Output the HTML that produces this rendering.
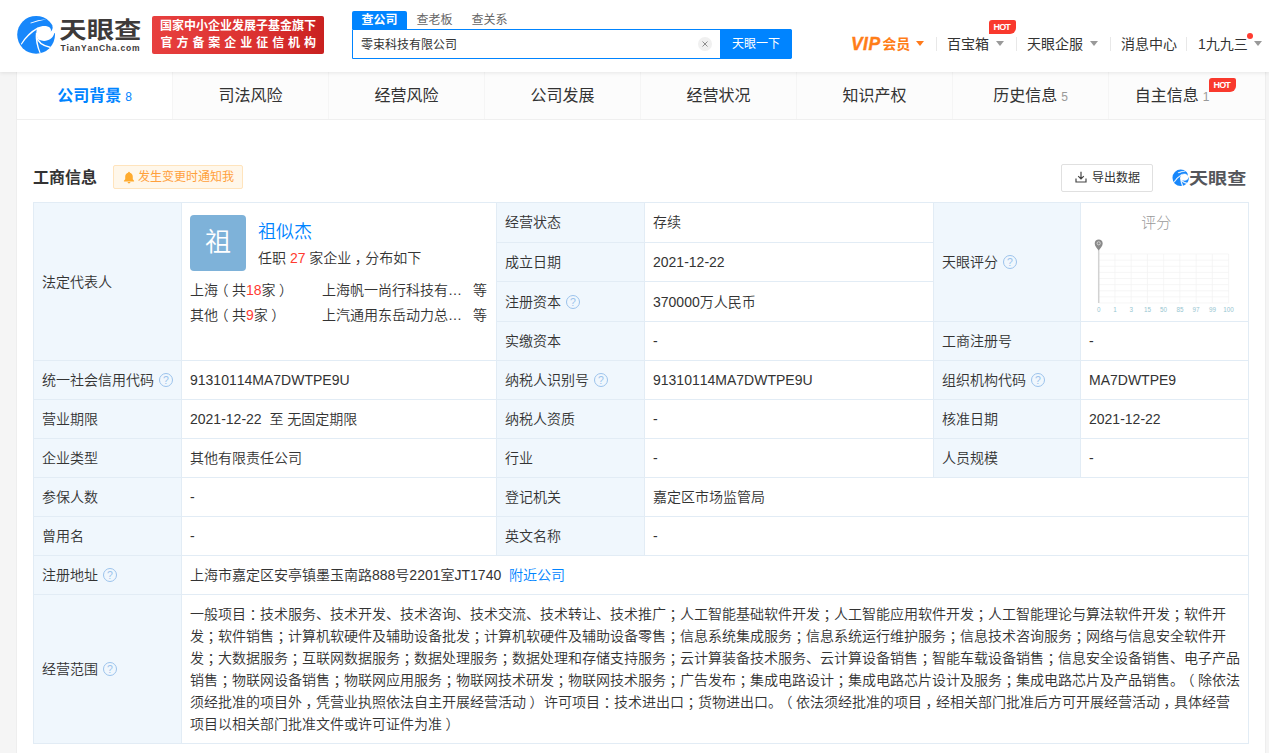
<!DOCTYPE html>
<html lang="zh-CN">
<head>
<meta charset="utf-8">
<title>天眼查</title>
<style>
*{box-sizing:border-box;margin:0;padding:0}
html,body{width:1269px;height:753px;overflow:hidden}
body{background:#f5f5f5;font-family:"Liberation Sans","Noto Sans CJK SC",sans-serif;font-size:14px;color:#333;position:relative;text-spacing-trim:space-all;font-kerning:none}
a{text-decoration:none;color:#0084ff}
/* header */
#hd{position:absolute;left:0;top:0;width:1269px;height:72px;background:#fff;box-shadow:0 1px 4px rgba(0,0,0,.09);z-index:5}
#logo{position:absolute;left:17px;top:14px;width:124px;height:42px}
#badge{position:absolute;left:152px;top:16px;width:172px;height:37.500px;border-radius:2px;background:linear-gradient(100deg,#e8403f 0%,#da302f 65%,#c8201f 100%);color:#fff;font-weight:bold;font-size:12px;line-height:16.800px;padding:2px 0 0 8px;white-space:nowrap}
#badge .l1{letter-spacing:0;display:block}
#badge .l2{letter-spacing:3.950px;display:block;padding-left:.500px}
#stabs{position:absolute;left:352px;top:11px;height:18px;font-size:12px;line-height:18px;color:#666;white-space:nowrap}
#stabs span{display:inline-block;height:18px;padding:0 9.5px;vertical-align:top}
#stabs .on{background:#0084ff;color:#fff;font-weight:bold;border-radius:2px 2px 0 0}
#sbox{position:absolute;left:352px;top:29px;width:440px;height:30px;border:1px solid #0084ff;border-radius:0 2px 2px 0;background:#fff}
#sbox .q{position:absolute;left:8px;top:1px;line-height:28px;font-size:12px;color:#333}
#sbox .x{position:absolute;left:345px;top:7px;width:14px;height:14px}
#sbox .btn{position:absolute;right:-1px;top:-1px;width:72px;height:30px;background:#0084ff;color:#fff;font-size:12px;line-height:30px;text-align:center;border-radius:0 2px 2px 0}
.nav{position:absolute;top:34px;font-size:14px;line-height:20px;color:#333;white-space:nowrap}
.car{position:absolute;top:41px;width:0;height:0;border-left:4.5px solid transparent;border-right:4.5px solid transparent;border-top:5px solid #999}
.sep{position:absolute;top:37px;width:1px;height:14px;background:#e8e8e8}
.hot{position:absolute;background:#f9392d;color:#fff;font-size:9px;font-weight:bold;line-height:14px;height:14px;width:27.500px;text-align:center;border-radius:3px 2px 6px 0;letter-spacing:-.9px;text-indent:-1px}
/* container */
#ct{position:absolute;left:17px;top:72px;width:1248px;height:681px;background:#fff;box-shadow:0 0 0 1px #eee}
#tabs{position:absolute;left:0;top:0;width:1248px;height:48px;display:flex;border-bottom:1px solid #efefef;background:#fcfcfc}
#tabs div{flex:0 0 156px;height:47px;line-height:47px;text-align:center;font-size:16px;color:#333;border-left:1px solid #f5f5f5;position:relative;white-space:nowrap}
#tabs div:first-child{border-left:0;flex-basis:155px}
#tabs div:last-child{flex-basis:157px}
#tabs div.on{background:#fff;color:#0084ff;font-weight:bold}
#tabs small{font-size:12px;font-weight:normal;color:#999;margin-left:4px}
#tabs div.on small{color:#0084ff}
#sec{position:absolute;left:16px;top:92px;width:1216px;height:30px}
#sec h2{position:absolute;left:0;top:2px;font-size:16px;line-height:24px;font-weight:bold;color:#333}
#notice{position:absolute;left:80px;top:1px;width:130px;height:24px;border:1px solid #ffe4bd;background:#fff7ea;border-radius:2px;color:#ffa03c;font-size:12px;line-height:22px;padding-left:24px;white-space:nowrap}
#notice svg{position:absolute;left:8.500px;top:5px;width:12px;height:13px}
#exp{position:absolute;left:1028px;top:0;width:92px;height:28px;border:1px solid #e0e0e0;border-radius:2px;font-size:12px;line-height:26px;color:#333;padding-left:30px;white-space:nowrap;background:#fff}
#exp svg{position:absolute;left:13px;top:6.200px}
#wm{position:absolute;left:1139px;top:3px;width:76px;height:22px}
/* table */
#tb{position:absolute;left:16px;top:130px;width:1215px;border-collapse:collapse;table-layout:fixed;font-size:14px;color:#333;font-weight:350}
#tb td{border:1px solid #e2ecf5;padding:0 8px;height:39px;vertical-align:middle;line-height:20px;white-space:nowrap;overflow:hidden}
#tb td.k{background:#f0f7fd}
.qi{display:inline-block;width:14px;height:14px;border:1px solid #9cc3ec;border-radius:50%;color:#9cc3ec;font-size:10.500px;line-height:12px;text-align:center;vertical-align:middle;position:relative;top:-1px;margin-left:1px}
.red{color:#ff3b30}
i.pr{font-style:normal;position:relative;left:3.500px}
i.pl{font-style:normal;position:relative;left:-3.500px}
#legal{position:relative;height:158px;padding:0!important;vertical-align:top!important}
#legal .av{position:absolute;left:8px;top:12px;width:56px;height:56px;border-radius:4px;background:#7eb2d9;color:#fff;font-size:26px;line-height:54px;text-align:center}
#legal .nm{position:absolute;left:76px;top:16px;font-size:18px;line-height:26px;color:#0084ff}
#legal .jb{position:absolute;left:76px;top:45px;font-size:14px;line-height:20px}
#legal .r{position:absolute;left:8px;font-size:14px;line-height:20px;width:300px}
#legal .r .c2{position:absolute;left:132px;top:0}
#legal .r .c3{position:absolute;left:283px;top:0}
#scope{white-space:nowrap!important;line-height:22px!important;padding:8px!important}
</style>
</head>
<body>
<div id="hd">
  <svg id="logo" viewBox="0 0 124 42">
    <g transform="translate(0.100,1.800)"><g id="swirl">
    <circle cx="19" cy="19" r="18.900" fill="#1787fb"/>
    <path d="M20.400 11.800C24 10 29 9.300 32 11.300 34 12.800 34.300 15 33.500 16 35.300 14.500 36 12 35.300 9.900L39 9.900 39 17.200 37.300 17.200C36.500 20 35 22.300 33.200 23.300 30.500 25.200 26 25.800 21.700 24 19.500 22 18.200 16 20.400 11.800Z" fill="#fff"/>
    <path d="M20.400 11.800Q9.800 17.500 3.700 28.300L4.500 28.900Q11 19 21.300 12.800Z" fill="#fff"/>
    <path d="M18.700 17Q17.800 27 22.500 37.500L23.600 37.200Q19.500 27 20.300 17.500Z" fill="#fff"/>
    <path d="M19.600 19.500Q21.500 28.500 33.600 31L32.800 32.200Q20 29.500 18.600 20Z" fill="#fff"/>
    <path d="M13.300 7Q20.400 3.900 29.500 3.500 20.500 5.200 13.600 7.700Z" fill="#fff"/>
    </g></g>
    <text x="42.300" y="24.400" font-family="'Liberation Sans','Noto Sans CJK SC',sans-serif" font-weight="700" font-size="23" fill="#3e3a39" textLength="82" lengthAdjust="spacingAndGlyphs">天眼查</text>
    <text x="43.500" y="37" font-family="'Liberation Sans',sans-serif" font-weight="bold" font-size="8.500" fill="#3e3a39" textLength="79" lengthAdjust="spacing">TianYanCha.com</text>
  </svg>
  <div id="badge"><span class="l1">国家中小企业发展子基金旗下</span><span class="l2">官方备案企业征信机构</span></div>
  <div id="stabs"><span class="on">查公司</span><span>查老板</span><span>查关系</span></div>
  <div id="sbox"><span class="q">零束科技有限公司</span>
    <svg class="x" viewBox="0 0 14 14"><circle cx="7" cy="7" r="7" fill="#f0f0f0"/><path d="M4.500 4.500l5 5M9.500 4.500l-5 5" stroke="#8c8c8c" stroke-width="1"/></svg>
    <div class="btn">天眼一下</div>
  </div>
  <div class="nav" style="left:851px;color:#ff7d18;font-weight:bold;font-size:14px"><i style="font-size:17.500px;letter-spacing:.450px;margin-right:1.800px;vertical-align:-1px;-webkit-text-stroke:.4px #ff7d18">VIP</i>会员</div>
  <div class="car" style="left:916px;border-top-color:#ff7a1a"></div>
  <div class="sep" style="left:936px"></div>
  <div class="nav" style="left:947px">百宝箱</div>
  <div class="car" style="left:996px"></div>
  <div class="hot" style="left:988.500px;top:19.700px">HOT</div>
  <div class="sep" style="left:1016px"></div>
  <div class="nav" style="left:1027px">天眼企服</div>
  <div class="car" style="left:1090px"></div>
  <div class="sep" style="left:1110px"></div>
  <div class="nav" style="left:1121px">消息中心</div>
  <div class="sep" style="left:1186px"></div>
  <div class="nav" style="left:1198px">1九九三</div>
  <div class="car" style="left:1254px"></div>
  <div style="position:absolute;left:1247px;top:33px;width:6px;height:6px;border-radius:50%;background:#ff3b30"></div>
</div>

<div id="ct">
  <div id="tabs">
    <div class="on">公司背景<small>8</small></div>
    <div>司法风险</div>
    <div>经营风险</div>
    <div>公司发展</div>
    <div>经营状况</div>
    <div>知识产权</div>
    <div>历史信息<small>5</small></div>
    <div><span style="position:relative;left:-15px">自主信息<small>1</small></span><span class="hot" style="left:99.500px;top:6px">HOT</span></div>
  </div>

  <div id="sec">
    <h2>工商信息</h2>
    <div id="notice"><svg width="11" height="12" viewBox="0 0 11 12"><path d="M5.5 0.6c.5 0 .8.3.8.8v.3c1.7.4 2.7 1.8 2.7 3.6v2.2l1.2 1.6v.5H.8v-.5L2 7.5V5.3c0-1.8 1-3.2 2.7-3.6v-.3c0-.5.3-.8.8-.8zM4.2 10.2h2.6c0 .8-.6 1.3-1.3 1.3s-1.3-.5-1.3-1.3z" fill="#ffab2e"/></svg>发生变更时通知我</div>
    <div id="exp"><svg width="12" height="12" viewBox="0 0 12 12" fill="none" stroke="#444" stroke-width="1.2"><path d="M6 .8v7M3.2 5.2L6 8l2.8-2.800M1 7.500v3.500h10V7.500"/></svg>导出数据</div>
    <svg id="wm" viewBox="0 0 76 22">
      <g transform="translate(0.410,2.510) scale(0.4365)">
    <circle cx="19" cy="19" r="18.900" fill="#1787fb"/><g stroke="#fff" stroke-width="1.100" stroke-linejoin="round">
    <path d="M20.400 11.800C24 10 29 9.300 32 11.300 34 12.800 34.300 15 33.500 16 35.300 14.500 36 12 35.300 9.900L39 9.900 39 17.200 37.300 17.200C36.500 20 35 22.300 33.200 23.300 30.500 25.200 26 25.800 21.700 24 19.500 22 18.200 16 20.400 11.800Z" fill="#fff"/>
    <path d="M20.400 11.800Q9.800 17.500 3.700 28.300L4.700 28.900Q11 19 21.300 12.800Z" fill="#fff"/>
    <path d="M18.700 17Q17.800 27 22.500 37.500L23.800 37.200Q19.500 27 20.300 17.500Z" fill="#fff"/>
    <path d="M19.600 19.500Q21.500 28.500 33.600 31L32.800 32.400Q20 29.500 18.600 20Z" fill="#fff"/>
    <path d="M13.300 7Q20.400 3.900 29.500 3.500 20.500 5.400 13.600 7.900Z" fill="#fff"/>
      </g></g>
      <text x="17" y="16.900" font-family="'Liberation Sans','Noto Sans CJK SC',sans-serif" font-weight="700" font-size="15.700" fill="#54565b" textLength="57.300" lengthAdjust="spacingAndGlyphs">天眼查</text>
    </svg>
  </div>

  <table id="tb">
    <colgroup><col style="width:148px"><col style="width:315px"><col style="width:148px"><col style="width:289px"><col style="width:147px"><col style="width:168px"></colgroup>
    <tr>
      <td class="k" rowspan="4">法定代表人</td>
      <td id="legal" rowspan="4">
        <div class="av">祖</div>
        <div class="nm">祖似杰</div>
        <div class="jb">任职 <span class="red">27</span> 家企业<i class="pr">，</i>分布如下</div>
        <div class="r" style="top:77px">上海<i class="pl">（</i>共<span class="red">18</span>家<i class="pr">）</i><span class="c2">上海帆一尚行科技有…</span><span class="c3">等</span></div>
        <div class="r" style="top:102px">其他<i class="pl">（</i>共<span class="red">9</span>家<i class="pr">）</i><span class="c2">上汽通用东岳动力总…</span><span class="c3">等</span></div>
      </td>
      <td class="k">经营状态</td><td>存续</td>
      <td class="k" rowspan="3">天眼评分 <span class="qi">?</span></td>
      <td rowspan="3" id="score" style="padding:0;vertical-align:top"><svg width="168" height="118" viewBox="0 0 168 118" style="display:block"><text x="75.3" y="25" text-anchor="middle" font-family="'Liberation Sans','Noto Sans CJK SC',sans-serif" font-size="15" font-weight="300" fill="#999">评分</text><path d="M17.70 51.0V100.0M33.94 51.0V100.0M50.18 51.0V100.0M66.41 51.0V100.0M82.65 51.0V100.0M98.89 51.0V100.0M115.12 51.0V100.0M131.36 51.0V100.0M147.60 51.0V100.0M17.7 51.00H147.6M17.7 57.12H147.6M17.7 63.25H147.6M17.7 69.38H147.6M17.7 75.50H147.6M17.7 81.62H147.6M17.7 87.75H147.6M17.7 93.88H147.6M17.7 100.00H147.6" stroke="#f2f2f2" stroke-width=".7" fill="none"/><path d="M17.7 47.0V100.0" stroke="#d2d2d2" stroke-width="1.500"/><path d="M17.70 36.50c-2.200 0-4 1.700-4 3.900 0 2.600 2.600 4.800 4 7.200 1.400-2.400 4-4.600 4-7.200 0-2.200-1.800-3.900-4-3.900z" fill="#8a8a8a"/><circle cx="17.70" cy="40.30" r="1.600" fill="none" stroke="#d8d8d8" stroke-width=".9"/><text x="17.7" y="108.6" text-anchor="middle" font-family="'Liberation Sans',sans-serif" font-size="6.300" fill="#98c6d1">0</text><text x="33.9" y="108.6" text-anchor="middle" font-family="'Liberation Sans',sans-serif" font-size="6.300" fill="#98c6d1">1</text><text x="50.2" y="108.6" text-anchor="middle" font-family="'Liberation Sans',sans-serif" font-size="6.300" fill="#98c6d1">3</text><text x="66.4" y="108.6" text-anchor="middle" font-family="'Liberation Sans',sans-serif" font-size="6.300" fill="#98c6d1">15</text><text x="82.6" y="108.6" text-anchor="middle" font-family="'Liberation Sans',sans-serif" font-size="6.300" fill="#98c6d1">50</text><text x="98.9" y="108.6" text-anchor="middle" font-family="'Liberation Sans',sans-serif" font-size="6.300" fill="#98c6d1">85</text><text x="115.1" y="108.6" text-anchor="middle" font-family="'Liberation Sans',sans-serif" font-size="6.300" fill="#98c6d1">97</text><text x="131.4" y="108.6" text-anchor="middle" font-family="'Liberation Sans',sans-serif" font-size="6.300" fill="#98c6d1">99</text><text x="147.6" y="108.6" text-anchor="middle" font-family="'Liberation Sans',sans-serif" font-size="6.300" fill="#98c6d1">100</text></svg></td>
    </tr>
    <tr><td class="k">成立日期</td><td>2021-12-22</td></tr>
    <tr><td class="k">注册资本 <span class="qi">?</span></td><td>370000万人民币</td></tr>
    <tr><td class="k">实缴资本</td><td>-</td><td class="k">工商注册号</td><td>-</td></tr>
    <tr><td class="k">统一社会信用代码 <span class="qi">?</span></td><td>91310114MA7DWTPE9U</td><td class="k">纳税人识别号 <span class="qi">?</span></td><td>91310114MA7DWTPE9U</td><td class="k">组织机构代码 <span class="qi">?</span></td><td>MA7DWTPE9</td></tr>
    <tr><td class="k">营业期限</td><td>2021-12-22&nbsp; 至 无固定期限</td><td class="k">纳税人资质</td><td>-</td><td class="k">核准日期</td><td>2021-12-22</td></tr>
    <tr><td class="k">企业类型</td><td>其他有限责任公司</td><td class="k">行业</td><td>-</td><td class="k">人员规模</td><td>-</td></tr>
    <tr><td class="k">参保人数</td><td>-</td><td class="k">登记机关</td><td colspan="3">嘉定区市场监管局</td></tr>
    <tr><td class="k">曾用名</td><td>-</td><td class="k">英文名称</td><td colspan="3">-</td></tr>
    <tr><td class="k">注册地址 <span class="qi">?</span></td><td colspan="5">上海市嘉定区安亭镇墨玉南路888号2201室JT1740&nbsp; <a>附近公司</a></td></tr>
    <tr><td class="k">经营范围 <span class="qi">?</span></td><td colspan="5" id="scope">一般项目<i class="pr">：</i>技术服务、技术开发、技术咨询、技术交流、技术转让、技术推广<i class="pr">；</i>人工智能基础软件开发<i class="pr">；</i>人工智能应用软件开发<i class="pr">；</i>人工智能理论与算法软件开发<i class="pr">；</i>软件开<br>发<i class="pr">；</i>软件销售<i class="pr">；</i>计算机软硬件及辅助设备批发<i class="pr">；</i>计算机软硬件及辅助设备零售<i class="pr">；</i>信息系统集成服务<i class="pr">；</i>信息系统运行维护服务<i class="pr">；</i>信息技术咨询服务<i class="pr">；</i>网络与信息安全软件开<br>发<i class="pr">；</i>大数据服务<i class="pr">；</i>互联网数据服务<i class="pr">；</i>数据处理服务<i class="pr">；</i>数据处理和存储支持服务<i class="pr">；</i>云计算装备技术服务、云计算设备销售<i class="pr">；</i>智能车载设备销售<i class="pr">；</i>信息安全设备销售、电子产品<br>销售<i class="pr">；</i>物联网设备销售<i class="pr">；</i>物联网应用服务<i class="pr">；</i>物联网技术研发<i class="pr">；</i>物联网技术服务<i class="pr">；</i>广告发布<i class="pr">；</i>集成电路设计<i class="pr">；</i>集成电路芯片设计及服务<i class="pr">；</i>集成电路芯片及产品销售。<i class="pl">（</i>除依法<br>须经批准的项目外<i class="pr">，</i>凭营业执照依法自主开展经营活动<i class="pr">）</i> 许可项目<i class="pr">：</i>技术进出口<i class="pr">；</i>货物进出口。<i class="pl">（</i>依法须经批准的项目<i class="pr">，</i>经相关部门批准后方可开展经营活动<i class="pr">，</i>具体经营<br>项目以相关部门批准文件或许可证件为准<i class="pr">）</i></td></tr>
  </table>
</div>
</body>
</html>
